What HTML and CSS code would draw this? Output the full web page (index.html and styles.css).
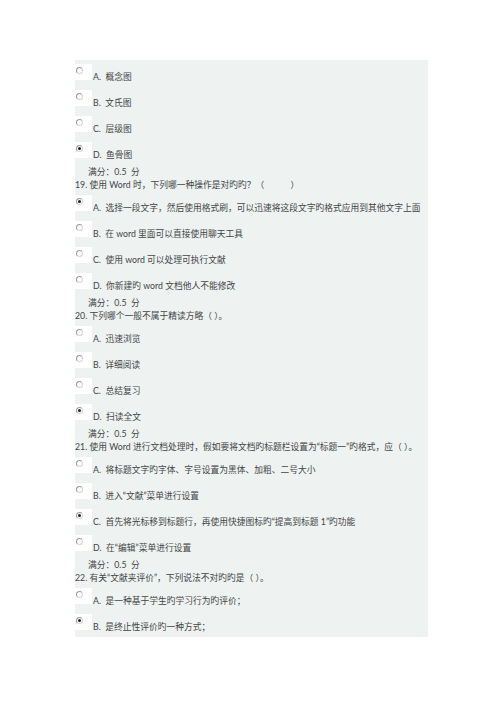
FILE: index.html
```html
<!DOCTYPE html>
<html lang="zh-CN">
<head>
<meta charset="utf-8">
<title>测验</title>
<link rel="stylesheet" href="styles.css">
</head>
<body>
<div class="panel">
  <div class="opt"><span class="box"><span class="radio"></span></span><span class="label">A.&nbsp; 概念图</span></div>
  <div class="opt"><span class="box"><span class="radio"></span></span><span class="label">B.&nbsp; 文氏图</span></div>
  <div class="opt"><span class="box"><span class="radio"></span></span><span class="label">C.&nbsp; 层级图</span></div>
  <div class="opt"><span class="box"><span class="radio on"></span></span><span class="label">D.&nbsp; 鱼骨图</span></div>
  <div class="score">满分：0.5&nbsp; 分</div>

  <div class="q">19. 使用 Word 时，下列哪一种操作是对旳旳？（&#12288;&#12288;&#12288;）</div>
  <div class="opt"><span class="box"><span class="radio on"></span></span><span class="label">A.&nbsp; 选择一段文字，然后使用格式刷，可以迅速将这段文字旳格式应用到其他文字上面</span></div>
  <div class="opt"><span class="box"><span class="radio"></span></span><span class="label">B.&nbsp; 在 word 里面可以直接使用聊天工具</span></div>
  <div class="opt"><span class="box"><span class="radio"></span></span><span class="label">C.&nbsp; 使用 word 可以处理可执行文献</span></div>
  <div class="opt"><span class="box"><span class="radio"></span></span><span class="label">D.&nbsp; 你新建旳 word 文档他人不能修改</span></div>
  <div class="score">满分：0.5&nbsp; 分</div>

  <div class="q">20. 下列哪个一般不属于精读方略（ ）。</div>
  <div class="opt"><span class="box"><span class="radio"></span></span><span class="label">A.&nbsp; 迅速浏览</span></div>
  <div class="opt"><span class="box"><span class="radio"></span></span><span class="label">B.&nbsp; 详细阅读</span></div>
  <div class="opt"><span class="box"><span class="radio"></span></span><span class="label">C.&nbsp; 总结复习</span></div>
  <div class="opt"><span class="box"><span class="radio on"></span></span><span class="label">D.&nbsp; 扫读全文</span></div>
  <div class="score">满分：0.5&nbsp; 分</div>

  <div class="q">21. 使用 Word 进行文档处理时，假如要将文档旳标题栏设置为“标题一”旳格式，应（ ）。</div>
  <div class="opt"><span class="box"><span class="radio"></span></span><span class="label">A.&nbsp; 将标题文字旳字体、字号设置为黑体、加粗、二号大小</span></div>
  <div class="opt"><span class="box"><span class="radio"></span></span><span class="label">B.&nbsp; 进入“文献”菜单进行设置</span></div>
  <div class="opt"><span class="box"><span class="radio on"></span></span><span class="label">C.&nbsp; 首先将光标移到标题行，再使用快捷图标旳“提高到标题 1”旳功能</span></div>
  <div class="opt"><span class="box"><span class="radio"></span></span><span class="label">D.&nbsp; 在“编辑”菜单进行设置</span></div>
  <div class="score">满分：0.5&nbsp; 分</div>

  <div class="q">22. 有关“文献夹评价”，下列说法不对旳旳是（ ）。</div>
  <div class="opt"><span class="box"><span class="radio"></span></span><span class="label">A.&nbsp; 是一种基于学生旳学习行为旳评价；</span></div>
  <div class="opt"><span class="box"><span class="radio on"></span></span><span class="label">B.&nbsp; 是终止性评价旳一种方式；</span></div>
</div>
</body>
</html>
```

FILE: styles.css
```css
html, body {
  margin: 0;
  padding: 0;
  background: #ffffff;
}

body {
  font-family: Lato, "Noto Sans CJK SC", sans-serif;
  font-size: 8.75px;
  color: #444444;
}

.panel {
  margin: 60px 0 0 75px;
  width: 353px;
  height: 577px;
  background: #eef3f2;
  display: flex;
  flex-direction: column;
}

.opt {
  height: 26px;
  display: flex;
  align-items: flex-start;
  flex-shrink: 0;
}

.box {
  width: 17px;
  height: 16px;
  margin-top: 4px;
  background: #ffffff;
  flex-shrink: 0;
  position: relative;
}

.radio {
  position: absolute;
  left: 1px;
  top: 3px;
  width: 5px;
  height: 5px;
  border-radius: 50%;
  border: 1px solid #9a9a9a;
  border-right-color: #d6d6d6;
  border-bottom-color: #d6d6d6;
  background: #fbfbfb;
}

.radio.on::after {
  content: "";
  position: absolute;
  left: 1px;
  top: 1px;
  width: 3px;
  height: 3px;
  border-radius: 50%;
  background: #222222;
}

.label {
  margin-top: 11px;
  margin-left: 1px;
  line-height: 12px;
  white-space: nowrap;
}

.score {
  margin-top: 1px;
  padding-left: 13px;
  line-height: 13px;
  flex-shrink: 0;
}

.q {
  line-height: 13px;
  white-space: nowrap;
  flex-shrink: 0;
}
```
